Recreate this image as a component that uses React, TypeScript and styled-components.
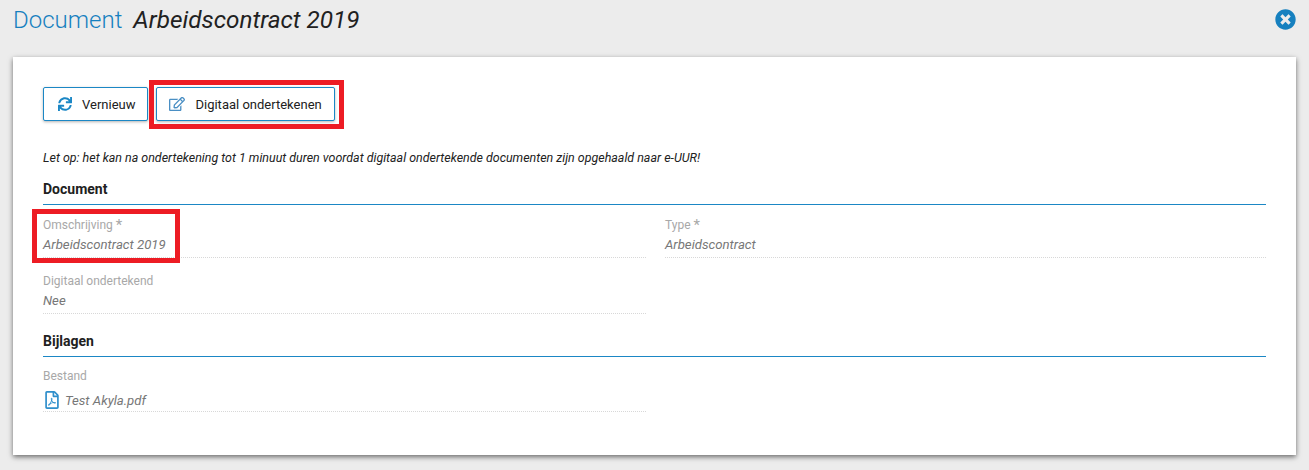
import { createGlobalStyle, styled } from 'styled-components';
import { FaRegEdit, FaRegFilePdf, FaSync, FaTimesCircle } from 'react-icons/fa';

const GlobalStyle = createGlobalStyle`
  html, body {
    margin: 0;
    height: 100%;
    background: #ececec;
    font-family: Roboto, "Liberation Sans", sans-serif;
    color: #212121;
    overflow: hidden;
  }
`;

const App = () => {
  return (
    <>
      <GlobalStyle />
      <Page>
        <Header>
          <Title>Document</Title>
          <Subtitle>Arbeidscontract 2019</Subtitle>
          <CloseButton>
            <FaTimesCircle />
          </CloseButton>
        </Header>
        <Card>
          <Toolbar>
            <Button>
              <FaSync />
              Vernieuw
            </Button>
            <Highlighted>
              <Button $wide>
                <FaRegEdit />
                Digitaal ondertekenen
              </Button>
              <RedFrame $top={-7} $left={-7} $right={-9} $bottom={-8} />
            </Highlighted>
          </Toolbar>
          <Notice>Let op: het kan na ondertekening tot 1 minuut duren voordat digitaal ondertekende documenten zijn opgehaald naar e-UUR!</Notice>
          <SectionTitle>Document</SectionTitle>
          <FieldGrid $offset={1}>
            <Field>
              <Label>
                Omschrijving <Star>*</Star>
              </Label>
              <Value>Arbeidscontract 2019</Value>
              <RedFrame $top={3} $left={-11} $width={148} $bottom={-5} />
            </Field>
            <Field>
              <Label>
                Type <Star>*</Star>
              </Label>
              <Value>Arbeidscontract</Value>
            </Field>
            <Field>
              <Label>Digitaal ondertekend</Label>
              <Value>Nee</Value>
            </Field>
          </FieldGrid>
          <SectionTitle>Bijlagen</SectionTitle>
          <FieldGrid>
            <Field>
              <Label>Bestand</Label>
              <FileValue>
                <FaRegFilePdf />
                Test Akyla.pdf
              </FileValue>
            </Field>
          </FieldGrid>
        </Card>
      </Page>
    </>
  );
};

export default App;

const Page = styled.div`
  display: flex;
  flex-direction: column;
  height: 470px;
  padding: 0 13px;
  box-sizing: border-box;
`;

const Header = styled.header`
  display: flex;
  align-items: baseline;
  gap: 11px;
  height: 57px;
  padding-top: 6px;
  box-sizing: border-box;
`;

const Title = styled.h1`
  margin: 0;
  font-size: 24px;
  font-weight: 300;
  line-height: 28px;
  color: #1680bf;
`;

const Subtitle = styled.span`
  font-size: 24.3px;
  font-weight: 400;
  font-style: italic;
  line-height: 28px;
  color: #212121;
`;

const CloseButton = styled.span`
  position: absolute;
  top: 9px;
  right: 13px;
  display: flex;
  font-size: 21px;
  color: #1680bf;
`;

const Card = styled.main`
  height: 398px;
  padding: 30px 30px 0;
  box-sizing: border-box;
  background: #fff;
  box-shadow: 0 2px 5px rgba(0, 0, 0, 0.55);
`;

const Toolbar = styled.div`
  display: flex;
  gap: 8px;
`;

const Highlighted = styled.div`
  position: relative;
  display: flex;
`;

const Button = styled.button<{ $wide?: boolean }>`
  display: flex;
  align-items: center;
  gap: 10px;
  height: 34px;
  padding: 0 12px 0 ${({ $wide }) => ($wide ? '12px' : '14px')};
  box-sizing: border-box;
  background: #fff;
  border: 1px solid #1b87c5;
  border-radius: 2px;
  box-shadow: 0 1px 3px rgba(0, 0, 0, 0.3);
  font-family: inherit;
  font-size: 13px;
  color: #212121;

  svg {
    width: ${({ $wide }) => ($wide ? '16px' : '14px')};
    height: ${({ $wide }) => ($wide ? '16px' : '14px')};
    color: ${({ $wide }) => ($wide ? '#4a8fc4' : '#1b87c5')};
  }
`;

const RedFrame = styled.span<{ $top: number; $left: number; $right?: number; $bottom: number; $width?: number }>`
  position: absolute;
  top: ${({ $top }) => $top}px;
  left: ${({ $left }) => $left}px;
  bottom: ${({ $bottom }) => $bottom}px;
  ${({ $right }) => ($right === undefined ? '' : `right: ${$right}px;`)}
  ${({ $width }) => ($width === undefined ? '' : `width: ${$width}px;`)}
  box-sizing: border-box;
  border: 5px solid #ed1c24;
  pointer-events: none;
`;

const Notice = styled.p`
  margin: 30px 0 0;
  font-size: 12.45px;
  font-style: italic;
  line-height: 14px;
  color: #212121;
`;

const SectionTitle = styled.h2`
  margin: 0;
  padding: 17px 0 7px;
  font-size: 14px;
  font-weight: 700;
  line-height: 15px;
  color: #212121;
  border-bottom: 1px solid #1b87c5;
`;

const FieldGrid = styled.div<{ $offset?: number }>`
  display: grid;
  grid-template-columns: 603px 601px;
  column-gap: 19px;
  row-gap: 4px;
  padding-top: ${({ $offset }) => $offset ?? 0}px;
  margin-bottom: 3px;
`;

const Field = styled.div`
  position: relative;
  padding-top: 12px;
`;

const Label = styled.div`
  font-size: 12px;
  line-height: 14px;
  color: #a8a8a8;
`;

const Star = styled.span`
  font-size: 15px;
  line-height: 14px;
  vertical-align: -1px;
`;

const Value = styled.div`
  display: flex;
  align-items: center;
  height: 26px;
  box-sizing: border-box;
  font-size: 13.2px;
  font-style: italic;
  color: #777;
  border-bottom: 1px dotted #d8d8d8;
`;

const FileValue = styled(Value)`
  gap: 6px;
  height: 29px;
  padding: 7px 0 1px 2px;

  svg {
    width: 14px;
    height: 18px;
    color: #2f8fcb;
  }
`;
